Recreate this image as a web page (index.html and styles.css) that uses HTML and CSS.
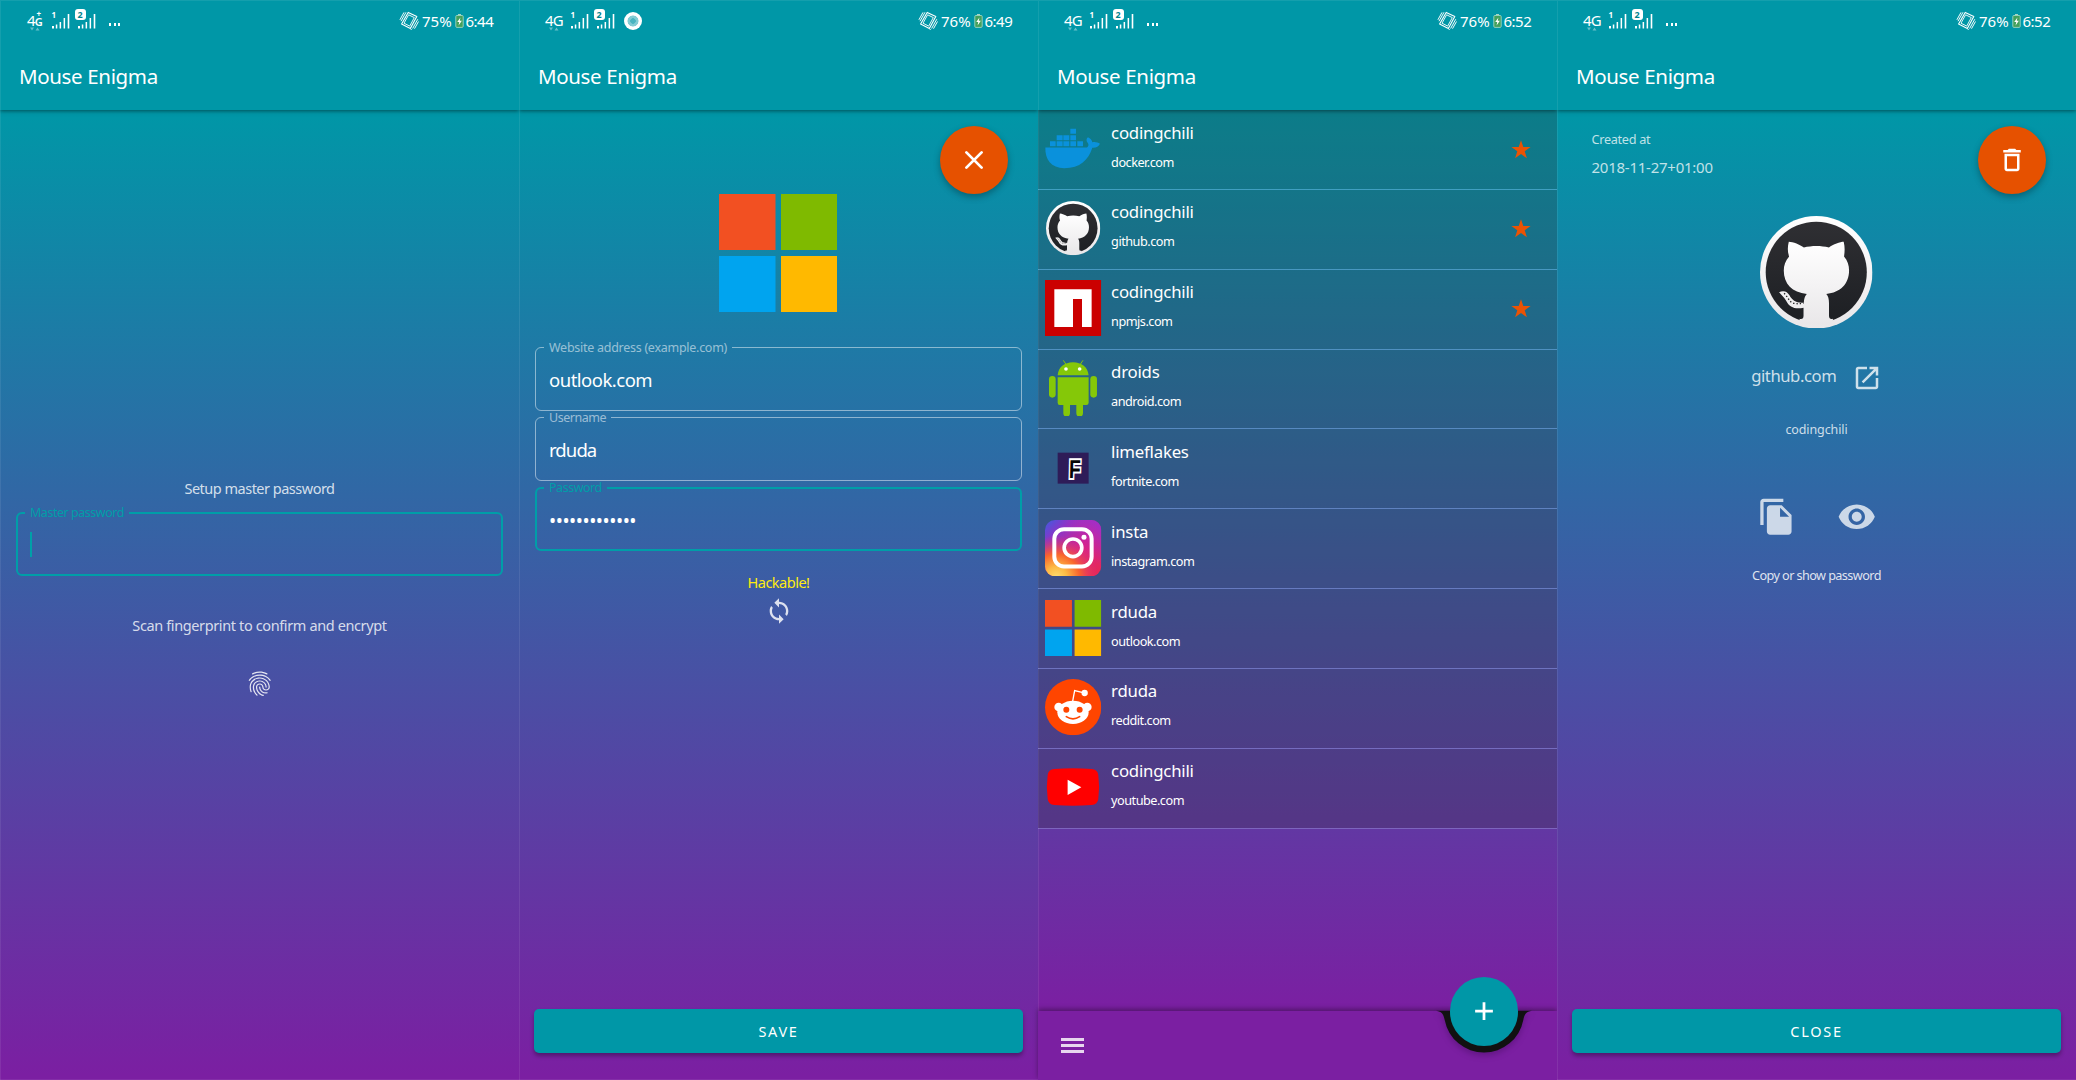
FILE: index.html
```html
<!DOCTYPE html>
<html lang="en">
<head>
<meta charset="utf-8">
<title>Mouse Enigma</title>
<link rel="stylesheet" href="styles.css">
</head>
<body>
<svg class="defs" aria-hidden="true">
  <defs>
    <linearGradient id="gh-light" x1="0" y1="0" x2="0" y2="1"><stop offset="0" stop-color="#fff"/><stop offset="1" stop-color="#e9e7e9"/></linearGradient>
    <linearGradient id="gh-dark" x1="0" y1="0" x2="0" y2="1"><stop offset="0" stop-color="#2f2f33"/><stop offset="1" stop-color="#1d1f23"/></linearGradient>
    <linearGradient id="ig-base" x1="0" y1="0" x2="1" y2="1"><stop offset="0" stop-color="#3f5be0"/><stop offset=".22" stop-color="#8a35c8"/><stop offset=".55" stop-color="#d6248f"/><stop offset="1" stop-color="#e8284f"/></linearGradient>
    <radialGradient id="ig-warm" cx=".2" cy="1.02" r=".75"><stop offset="0" stop-color="#ffdd70"/><stop offset=".25" stop-color="#fdbb45"/><stop offset=".55" stop-color="#f9652d"/><stop offset="1" stop-color="#e02a70" stop-opacity="0"/></radialGradient>
    <linearGradient id="ig-top" x1=".3" y1=".6" x2="1" y2="0"><stop offset=".4" stop-color="#a52ec8" stop-opacity="0"/><stop offset="1" stop-color="#9b2fd0"/></linearGradient>
  </defs>
  <symbol id="signal" viewBox="0 0 48 20">
    <path d="M0 17h2v2.500h-2zM3.800 15.500h1.500v4h-1.500zM7.600 13h1.500v6.500h-1.500zM11.600 9h1.500v10.500h-1.500zM15.700 5h1.600v14.500h-1.600z" fill="#fff"/>
    <path d="M26 17h2v2.500h-2zM29.800 15.500h1.500v4h-1.500zM33.600 13h1.500v6.500h-1.500zM37.600 9h1.500v10.500h-1.500zM41.700 5h1.600v14.500h-1.600z" fill="#fff"/>
  </symbol>
  <symbol id="traffic" viewBox="0 0 10 4"><path d="M0 .5h4L2 3.500zM5.500 3.500h4L7.500.5z" fill="#fff" opacity=".4"/></symbol>
  <symbol id="vibrate" viewBox="0 0 20 20">
    <g fill="none" stroke="#fff" stroke-width="1.100"><path d="M9.200 1.400L17.800 5.600 11.300 17.400 2.600 12.900z" stroke-linejoin="round"/><path d="M9.600 3.800l5.700 2.800-4.600 8.500-5.700-2.900z" stroke-width=".9"/><path d="M7 1.300L2 10.200M5 1.400L.9 8.800M18.800 8.200l-5.200 9.300M19.500 10.500l-4 7.200M12.500 18l-.6 1" stroke-width=".95"/></g>
  </symbol>
  <symbol id="battery" viewBox="0 0 10 16"><path d="M3.300.3h3.400v1.500h-3.400z" fill="#b5dcc5"/><rect x=".9" y="1.900" width="8.200" height="13.200" rx="1.200" fill="#43a05c" stroke="#9fd6c4" stroke-width="1"/><path d="M6 4L2.500 9h2.200L4 13l3.600-5.200H5.300z" fill="#fff"/></symbol>
  <symbol id="fingerprint" viewBox="0 0 24 24"><path d="M17.810 4.470c-.08 0-.16-.02-.23-.06C15.660 3.420 14 3 12.010 3c-1.980 0-3.860.47-5.570 1.410-.24.13-.54.04-.68-.2-.13-.24-.04-.55.2-.68C7.820 2.520 9.860 2 12.010 2c2.130 0 3.990.47 6.030 1.520.25.13.34.43.21.67-.09.18-.26.28-.44.28zM3.500 9.720c-.1 0-.2-.03-.29-.09-.23-.16-.28-.47-.12-.7.99-1.400 2.250-2.500 3.750-3.270C9.980 4.040 14 4.030 17.150 5.650c1.500.77 2.760 1.860 3.750 3.250.16.22.11.54-.12.7-.23.16-.54.11-.7-.12-.9-1.260-2.040-2.250-3.390-2.940-2.870-1.470-6.540-1.470-9.400.01-1.360.7-2.500 1.700-3.400 2.960-.08.14-.23.21-.39.21zm6.250 12.070c-.13 0-.26-.05-.35-.15-.87-.87-1.340-1.430-2.010-2.640-.69-1.230-1.050-2.730-1.050-4.340 0-2.970 2.540-5.390 5.660-5.390s5.660 2.420 5.660 5.390c0 .28-.22.5-.5.5s-.5-.22-.5-.5c0-2.420-2.090-4.390-4.660-4.390-2.570 0-4.660 1.970-4.660 4.390 0 1.440.32 2.770.93 3.850.64 1.150 1.080 1.640 1.850 2.420.19.2.19.51 0 .71-.11.1-.24.15-.37.15zm7.170-1.850c-1.190 0-2.240-.3-3.100-.89-1.490-1.010-2.380-2.650-2.380-4.390 0-.28.22-.5.5-.5s.5.22.5.5c0 1.410.72 2.740 1.940 3.560.71.48 1.540.71 2.540.71.24 0 .64-.03 1.040-.1.27-.05.53.13.58.41.05.27-.13.53-.41.58-.57.11-1.070.12-1.210.12zM14.910 22c-.04 0-.09-.01-.13-.02-1.590-.44-2.630-1.030-3.720-2.100-1.400-1.390-2.170-3.240-2.170-5.220 0-1.620 1.380-2.940 3.080-2.940 1.700 0 3.080 1.320 3.080 2.940 0 1.070.93 1.940 2.080 1.940s2.080-.87 2.080-1.940c0-3.770-3.250-6.830-7.250-6.830-2.840 0-5.440 1.580-6.610 4.030-.39.81-.59 1.760-.59 2.800 0 .78.07 2.010.67 3.610.1.26-.03.55-.29.64-.26.1-.55-.04-.64-.29-.49-1.310-.73-2.610-.73-3.960 0-1.200.23-2.290.68-3.240 1.330-2.790 4.280-4.600 7.510-4.600 4.550 0 8.250 3.510 8.250 7.830 0 1.620-1.380 2.940-3.080 2.940s-3.080-1.320-3.080-2.940c0-1.070-.93-1.940-2.080-1.940s-2.080.87-2.080 1.940c0 1.710.66 3.310 1.870 4.510.95.94 1.860 1.460 3.270 1.850.27.07.42.35.35.61-.05.23-.26.38-.47.38z" fill="currentColor"/></symbol>
  <symbol id="sync" viewBox="0 0 24 24"><path d="M12 4V1L8 5l4 4V6c3.310 0 6 2.690 6 6 0 1.010-.25 1.970-.7 2.800l1.460 1.460C19.540 15.030 20 13.570 20 12c0-4.420-3.580-8-8-8zm0 14c-3.310 0-6-2.690-6-6 0-1.010.25-1.970.7-2.800L5.240 7.740C4.460 8.970 4 10.430 4 12c0 4.420 3.580 8 8 8v3l4-4-4-4v3z" fill="currentColor"/></symbol>
  <symbol id="close" viewBox="0 0 24 24"><path d="M5.900 5.900l12.200 12.200M18.100 5.900L5.900 18.100" stroke="currentColor" stroke-width="2.200" stroke-linecap="round"/></symbol>
  <symbol id="trash" viewBox="0 0 24 24"><path d="M6 19c0 1.100.9 2 2 2h8c1.100 0 2-.9 2-2V7H6v12zM8 9h8v10H8V9zm7.500-5l-1-1h-5l-1 1H5v2h14V4h-3.500z" fill="currentColor"/></symbol>
  <symbol id="open" viewBox="0 0 24 24"><path d="M19 19H5V5h7V3H5c-1.110 0-2 .9-2 2v14c0 1.100.89 2 2 2h14c1.100 0 2-.9 2-2v-7h-2v7zM14 3v2h3.590l-9.830 9.830 1.410 1.410L19 6.410V10h2V3h-7z" fill="currentColor"/></symbol>
  <symbol id="copy" viewBox="0 0 24 24"><path d="M16 1H4c-1.100 0-2 .9-2 2v14h2V3h12V1zm-1 4l6 6v10c0 1.100-.9 2-2 2H7.990C6.890 23 6 22.100 6 21l.01-14c0-1.100.89-2 1.990-2h7zm-1 7h5.500L14 6.500V12z" fill="currentColor"/></symbol>
  <symbol id="eye" viewBox="0 0 24 24"><path d="M12 4.500C7 4.500 2.730 7.610 1 12c1.730 4.390 6 7.500 11 7.500s9.270-3.110 11-7.500c-1.730-4.390-6-7.500-11-7.500zM12 17c-2.760 0-5-2.240-5-5s2.240-5 5-5 5 2.240 5 5-2.240 5-5 5zm0-8c-1.660 0-3 1.340-3 3s1.340 3 3 3 3-1.340 3-3-1.340-3-3-3z" fill="currentColor"/></symbol>
  <symbol id="star" viewBox="-10 -10 20 20"><path d="M0-9.800L2.300-3.100 9.600-3 3.700 1.300 5.900 8.300 0 4.100-5.900 8.300-3.700 1.300-9.600-3-2.300-3.100z" fill="#ea5304"/></symbol>

  <symbol id="microsoft" viewBox="0 0 118 118"><path d="M0 0h56.500v56H0z" fill="#f25022"/><path d="M62 0h56v56H62z" fill="#7fba00"/><path d="M0 62h56.500v56H0z" fill="#00a4ef"/><path d="M62 62h56v56H62z" fill="#ffb900"/></symbol>
  <symbol id="github" viewBox="610 647 336 336">
    <circle cx="778" cy="815" r="168" fill="url(#gh-light)"/>
    <circle cx="778" cy="815" r="151" fill="url(#gh-dark)"/>
    <path d="M696 724C708 724 730 733 741 741 765 735 792 735 816 741 828 732 850 724 860 724 864 740 863 755 861 768 872 780 876 795 876 810 876 850 850 876 808 880 814 886 816 896 816 906V945Q817 958 828 954L826 972H730L728 954Q740 957 740 945V921C715 926 698 920 688 900 682 890 674 884 667 875 680 868 692 873 698 884 706 899 718 908 741 906 742 890 746 884 750 880 706 876 681 850 681 810 681 795 686 780 697 768 692 755 692 740 696 724Z" fill="url(#gh-light)"/>
    <path d="M682 878C692 886 696 902 708 907 720 910 730 909 740 908" fill="none" stroke="#222" stroke-width="4" stroke-dasharray="4 6"/>
  </symbol>
  <symbol id="docker" viewBox="22 62.500 169 169"><path d="M23 142H148C153 139 154 133 150 128 145 122 146 114 151 111 158 114 163 119 164 126 172 124 181 126 187 131 183 140 175 144 164 143 152 180 128 204 80 204 40 204 22 178 23 142ZM37 123h17v15H37zM57 123h18v15H57zM77 123h18v15H77zM98 123h17v15H98zM119 123h17v15H119zM57 105h18v15H57zM77 105h18v15H77zM98 105h17v15H98zM98 86h17v15H98z" fill="#0a91dc"/></symbol>
  <symbol id="npm" viewBox="0 0 169 169"><path d="M0 0h169v169H0z" fill="#cb0000"/><path d="M28 28H140V141H111V57H84V141H28Z" fill="#fff"/></symbol>
  <symbol id="android" viewBox="22 779 169 169"><g fill="#85c808"><path d="M60 825C62 801 80 786 106 786S151 801 153 825ZM60 831h93v76q0 7-7 7h-10v25a10 10 0 0 1-20 0v-25H97v25a10 10 0 0 1-20 0v-25H66q-6 0-6-7z"/><rect x="34" y="827" width="20" height="65" rx="10"/><rect x="158" y="827" width="20" height="65" rx="10"/></g><path d="M77 780l8 12M136 780l-8 12" stroke="#85c808" stroke-width="3"/><circle cx="85" cy="806" r="5.500" fill="#fff"/><circle cx="126" cy="806" r="5.500" fill="#fff"/></symbol>
  <symbol id="instagram" viewBox="22 148.500 169 169"><rect x="22" y="148.500" width="169" height="169" rx="30" fill="url(#ig-base)"/><rect x="22" y="148.500" width="169" height="169" rx="30" fill="url(#ig-top)"/><rect x="22" y="148.500" width="169" height="169" rx="30" fill="url(#ig-warm)"/><rect x="50" y="176" width="112" height="112" rx="29" fill="none" stroke="#fff" stroke-width="12"/><circle cx="106" cy="232" r="26.500" fill="none" stroke="#fff" stroke-width="11"/><circle cx="139" cy="200" r="7.500" fill="#fff"/></symbol>
  <symbol id="reddit" viewBox="22 627 169 169"><circle cx="106.500" cy="711.500" r="84.500" fill="#ff4500"/><g fill="#fff"><ellipse cx="106" cy="727" rx="47" ry="35"/><circle cx="63" cy="711" r="13"/><circle cx="149" cy="711" r="13"/><circle cx="141" cy="669" r="9.500"/></g><path d="M105 694L111 662 136 668" fill="none" stroke="#fff" stroke-width="4"/><circle cx="86" cy="719" r="9" fill="#ff4500"/><circle cx="126" cy="719" r="9" fill="#ff4500"/><path d="M86 740Q106 753 126 740" fill="none" stroke="#ff4500" stroke-width="5" stroke-linecap="round"/></symbol>
  <symbol id="youtube" viewBox="22 866 169 169"><path d="M50 896Q106 892 162 896 180 897 182 914 187 950 182 986 180 1003 162 1004 106 1008 50 1004 32 1003 30 986 25 950 30 914 32 897 50 896Z" fill="#f00"/><path d="M90 928L131 951 90 974Z" fill="#fff"/></symbol>
</svg>

<main class="screens">
  <section class="screen">
    <header class="app-bar">
      <div class="status">
        <span class="net net-plus"><span>4<small>G</small></span><i>+</i><svg class="traffic"><use href="#traffic"/></svg></span>
        <span class="sims"><svg class="signal"><use href="#signal"/></svg><b>1</b><b class="on">2</b></span>
        <span class="more"><i></i><i></i><i></i></span>
        <span class="right"><svg class="vibrate"><use href="#vibrate"/></svg><span class="pct">75%</span><svg class="battery"><use href="#battery"/></svg><span class="time">6:44</span></span>
      </div>
      <h1>Mouse Enigma</h1>
    </header>
    <div class="content setup">
      <p class="hint">Setup master password</p>
      <fieldset class="field focused"><legend>Master password</legend><span class="caret"></span></fieldset>
      <p class="hint scan">Scan fingerprint to confirm and encrypt</p>
      <svg class="finger"><use href="#fingerprint"/></svg>
    </div>
  </section>

  <section class="screen">
    <header class="app-bar">
      <div class="status">
        <span class="net"><span>4G</span><svg class="traffic"><use href="#traffic"/></svg></span>
        <span class="sims"><svg class="signal"><use href="#signal"/></svg><b>1</b><b class="on">2</b></span>
        <span class="disc"></span>
        <span class="right"><svg class="vibrate"><use href="#vibrate"/></svg><span class="pct">76%</span><svg class="battery"><use href="#battery"/></svg><span class="time">6:49</span></span>
      </div>
      <h1>Mouse Enigma</h1>
    </header>
    <button class="fab"><svg><use href="#close"/></svg></button>
    <div class="content edit">
      <svg class="logo"><use href="#microsoft"/></svg>
      <fieldset class="field"><legend class="wide">Website address (example.com)</legend><span class="value">outlook.com</span></fieldset>
      <fieldset class="field"><legend>Username</legend><span class="value tight">rduda</span></fieldset>
      <fieldset class="field focused"><legend>Password</legend><span class="value dots">•••••••••••••</span></fieldset>
      <p class="strength">Hackable!</p>
      <svg class="sync"><use href="#sync"/></svg>
      <button class="wide-button">SAVE</button>
    </div>
  </section>

  <section class="screen list-screen">
    <header class="app-bar">
      <div class="status">
        <span class="net"><span>4G</span><svg class="traffic"><use href="#traffic"/></svg></span>
        <span class="sims"><svg class="signal"><use href="#signal"/></svg><b>1</b><b class="on">2</b></span>
        <span class="more"><i></i><i></i><i></i></span>
        <span class="right"><svg class="vibrate"><use href="#vibrate"/></svg><span class="pct">76%</span><svg class="battery"><use href="#battery"/></svg><span class="time">6:52</span></span>
      </div>
      <h1>Mouse Enigma</h1>
    </header>
    <ul class="list">
      <li><svg class="site"><use href="#docker"/></svg><div><b>codingchili</b><span>docker.com</span></div><svg class="star"><use href="#star"/></svg></li>
      <li><svg class="site inset"><use href="#github"/></svg><div><b>codingchili</b><span>github.com</span></div><svg class="star"><use href="#star"/></svg></li>
      <li><svg class="site"><use href="#npm"/></svg><div><b>codingchili</b><span>npmjs.com</span></div><svg class="star"><use href="#star"/></svg></li>
      <li><svg class="site"><use href="#android"/></svg><div><b>droids</b><span>android.com</span></div></li>
      <li><svg class="site" viewBox="22 28 169 169"><path d="M60 66h93v93H60z" fill="#2e1c58"/><text transform="translate(93 141) scale(.8 1.080) skewX(-2)" class="f-mark">F</text></svg><div><b>limeflakes</b><span>fortnite.com</span></div></li>
      <li><svg class="site"><use href="#instagram"/></svg><div><b>insta</b><span>instagram.com</span></div></li>
      <li><svg class="site"><use href="#microsoft"/></svg><div><b>rduda</b><span>outlook.com</span></div></li>
      <li><svg class="site"><use href="#reddit"/></svg><div><b>rduda</b><span>reddit.com</span></div></li>
      <li><svg class="site"><use href="#youtube"/></svg><div><b>codingchili</b><span>youtube.com</span></div></li>
    </ul>
    <footer class="bottom-bar">
      <span class="menu"><i></i><i></i><i></i></span>
      <svg class="notch" viewBox="-50 -5 100 55"><path d="M-48-.3C-42 .5-40.500 3-39.300 9A40 40 0 0 0 39.300 9C40.500 3 42 .5 48-.3Z" fill="#111"/></svg>
      <button class="fab add"><svg viewBox="0 0 24 24"><path d="M12 4.900v14.200M4.900 12h14.200" stroke="#fff" stroke-width="2.200"/></svg></button>
    </footer>
  </section>

  <section class="screen">
    <header class="app-bar">
      <div class="status">
        <span class="net"><span>4G</span><svg class="traffic"><use href="#traffic"/></svg></span>
        <span class="sims"><svg class="signal"><use href="#signal"/></svg><b>1</b><b class="on">2</b></span>
        <span class="more"><i></i><i></i><i></i></span>
        <span class="right"><svg class="vibrate"><use href="#vibrate"/></svg><span class="pct">76%</span><svg class="battery"><use href="#battery"/></svg><span class="time">6:52</span></span>
      </div>
      <h1>Mouse Enigma</h1>
    </header>
    <button class="fab"><svg><use href="#trash"/></svg></button>
    <div class="content detail">
      <div class="created"><span>Created at</span><time>2018-11-27+01:00</time></div>
      <svg class="avatar"><use href="#github"/></svg>
      <div class="site-link"><span>github.com</span><svg><use href="#open"/></svg></div>
      <p class="user">codingchili</p>
      <div class="actions"><svg><use href="#copy"/></svg><svg><use href="#eye"/></svg></div>
      <p class="copy-hint">Copy or show password</p>
      <button class="wide-button">CLOSE</button>
    </div>
  </section>
</main>
</body>
</html>
```
FILE: styles.css
```css
* { box-sizing: border-box; }
body {
  margin: 0;
  width: 2076px;
  height: 1080px;
  overflow: hidden;
  font-family: "Noto Sans", sans-serif;
  color: #fff;
}
p, h1, ul, fieldset { margin: 0; padding: 0; }
svg { display: block; flex: none; }
.defs { position: absolute; width: 0; height: 0; }
button { border: 0; padding: 0; color: #fff; font-family: inherit; }

.screens { display: grid; grid-template-columns: repeat(4, 519px); height: 1080px; }
.screen {
  position: relative;
  display: flex;
  flex-direction: column;
  height: 1080px;
  background: linear-gradient(#0097a7 110px, #7b1fa2 1075px);
  box-shadow: inset 1px 0 rgba(255, 255, 255, .08), inset 0 -1px rgba(255, 255, 255, .07);
}

/* app bar */
.app-bar {
  position: relative;
  z-index: 2;
  height: 110px;
  flex: none;
  background: #0097a7;
  box-shadow: 0 1px 4px rgba(0, 0, 0, .5), inset 1px 1px rgba(255, 255, 255, .08);
  clip-path: inset(0 0 -10px 0);
}
.status { display: flex; align-items: flex-start; height: 57px; padding: 0 24px 0 26px; }
.net { position: relative; width: 25.500px; padding-top: 8.500px; font-size: 15px; line-height: 22px; letter-spacing: -.9px; }
.net small { font-size: 11px; font-weight: 600; }
.net > i { position: absolute; left: 10.500px; top: 10px; font: 700 8px/8px "Noto Sans", sans-serif; }
.net .traffic { position: absolute; left: 4px; top: 26.500px; }
.net-plus { padding-left: 1px; }
.traffic { width: 10px; height: 4px; }
.sims { position: relative; }
.signal { width: 48px; height: 20px; margin-top: 8.500px; }
.sims b { position: absolute; left: 0; top: 10px; font-size: 8px; line-height: 10px; }
.sims .on { left: 23px; top: 9px; width: 11px; height: 11px; border-radius: 3px; background: #fff; color: #00848f; font-size: 9px; line-height: 11px; text-align: center; }
.more { display: flex; gap: 2.500px; margin: 23px 0 0 9.500px; }
.more i { width: 2px; height: 2.500px; background: #fff; }
.disc { width: 18px; height: 18px; margin: 12px 0 0 5.500px; border-radius: 50%; background: radial-gradient(circle, #49b4c0 0 2.500px, #82ccd4 3px 5.200px, #fff 5.800px); }
.right { display: flex; margin-left: auto; font-size: 15px; line-height: 22px; }
.right > span { margin-top: 9.500px; }
.vibrate { width: 20px; height: 20px; margin: 11px 3px 0 0; }
.pct { width: 33px; letter-spacing: 0; }
.battery { width: 9px; height: 16px; margin: 13px 1.500px 0 0; }
.time { width: 29.500px; letter-spacing: -.5px; }
h1 { padding-left: 19px; font-size: 20.500px; line-height: 38px; font-weight: 400; letter-spacing: -.35px; }

/* content */
.content { display: flex; flex-direction: column; align-items: center; flex: 1; }
.hint, .strength { font-size: 14.500px; line-height: 20px; letter-spacing: -.5px; color: rgba(255, 255, 255, .8); }
.setup { padding-top: 367.500px; }
.hint.scan { margin-top: 40px; letter-spacing: -.38px; }
.finger { width: 29.500px; height: 29.500px; margin-top: 33.500px; color: rgba(255, 255, 255, .85); }

.field {
  width: 487px;
  height: 71px;
  padding: 0 0 0 8px;
  border: 1.500px solid rgba(255, 255, 255, .48);
  border-radius: 6px;
  margin-bottom: -.7px;
}
.field legend { height: 16px; padding: 0 5px; font-size: 12.500px; line-height: 16px; letter-spacing: -.47px; color: rgba(255, 255, 255, .55); }
.field legend.wide { letter-spacing: -.27px; }
.field.focused { border: 2px solid #009ea8; padding-left: 7px; }
.field.focused legend { color: #009ea8; }
.setup .field { margin-top: 7.500px; }
.caret { display: block; width: 2px; height: 25px; margin: 11px 0 0 5px; background: #00a0a8; }
.value { display: block; margin: 12px 0 0 5px; font-size: 18.500px; line-height: 24px; letter-spacing: -.5px; }
.value.tight { letter-spacing: -.9px; }
.value.dots { font-size: 19px; letter-spacing: -.45px; margin-top: 13px; }

.edit { padding-top: 84px; }
.logo { width: 118px; height: 118px; margin: 0 1px 27.500px 0; }
.strength { margin-top: 21.500px; color: #ffeb0f; }
.sync { width: 28px; height: 28px; margin-top: 5px; color: rgba(255, 255, 255, .82); }

.wide-button {
  width: 489px;
  height: 44px;
  margin: auto 0 27px;
  border-radius: 5px;
  background: #0097a7;
  box-shadow: 0 3px 4px rgba(0, 0, 0, .32);
  font-size: 14.500px;
  line-height: 44px;
  letter-spacing: 1.700px;
}
.fab {
  position: absolute;
  z-index: 3;
  left: 420.500px;
  top: 125.500px;
  width: 68.500px;
  height: 68.500px;
  display: grid;
  place-items: center;
  border-radius: 50%;
  background: #e65100;
  box-shadow: 0 3px 7px rgba(0, 0, 0, .3);
}
.fab svg { width: 30px; height: 30px; }

/* accounts */
.list-screen { background: linear-gradient(#0097a7 110px, #7b1fa2 1011px); }
.list { list-style: none; }
.list li {
  display: flex;
  height: 79.850px;
  padding: 10.500px 27px 0 7.300px;
  border-bottom: 1.500px solid rgba(190, 205, 255, .3);
  background: rgba(48, 48, 48, .25) padding-box;
}
.site { width: 56.300px; height: 56.300px; }
.site.inset { padding: 1px; }
.list div { display: flex; flex-direction: column; margin-left: 9.500px; }
.list b { font-weight: 400; font-size: 16.800px; line-height: 24px; letter-spacing: -.22px; }
.list div span { font-size: 12.700px; line-height: 18px; letter-spacing: -.5px; margin-top: 8px; }
.star { width: 20px; height: 20px; margin: 19px -.5px 0 auto; }
.f-mark { font: 700 72px "Liberation Sans", sans-serif; fill: #050505; stroke: #fff; stroke-width: 11px; paint-order: stroke; }

.bottom-bar {
  position: relative;
  height: 69px;
  margin-top: auto;
  padding: 27px 0 0 23px;
  background: #7b1fa2;
  box-shadow: 0 -2px 5px rgba(0, 0, 0, .35);
}
.menu { display: flex; flex-direction: column; gap: 3.300px; width: 22.500px; }
.menu i { height: 2.700px; background: rgba(255, 255, 255, .82); }
.notch { position: absolute; left: 395.700px; top: -5px; width: 100px; height: 55px; filter: drop-shadow(0 3px 3px rgba(40, 0, 60, .3)); }
.fab.add { left: 411.500px; top: -34px; background: #0097a7; box-shadow: none; }

/* details */
.detail { padding-top: 20px; }
.created { display: flex; flex-direction: column; align-self: flex-start; margin-left: 34.500px; color: rgba(255, 255, 255, .75); }
.created span { font-size: 12.700px; line-height: 18px; letter-spacing: -.3px; }
.created time { margin-top: 9px; font-size: 15px; line-height: 20px; letter-spacing: -.25px; }
.avatar { width: 112.500px; height: 112.500px; margin-top: 38.500px; }
.site-link { display: flex; align-items: center; gap: 15.500px; margin-top: 34.500px; color: rgba(255, 255, 255, .78); }
.site-link span { font-size: 16.700px; line-height: 24px; letter-spacing: -.45px; margin-top: -3px; }
.site-link svg { width: 30px; height: 30px; }
.user { margin-top: 28.500px; font-size: 12.500px; line-height: 18px; letter-spacing: -.1px; color: rgba(255, 255, 255, .78); }
.actions { display: flex; gap: 40px; margin-top: 58px; color: rgba(255, 255, 255, .75); }
.actions svg { width: 39.500px; height: 39.500px; }
.copy-hint { margin-top: 29px; font-size: 12.700px; line-height: 18px; letter-spacing: -.6px; color: rgba(255, 255, 255, .85); }
```
